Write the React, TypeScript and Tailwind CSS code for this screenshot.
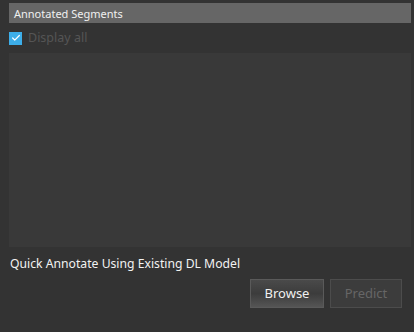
import { Check } from "lucide-react";

const font = { fontFamily: '"Noto Sans", "Open Sans", sans-serif' };

export default function App() {
  return (
    <div className="w-[414px] h-[332px] bg-[#333333] text-[12px] leading-none" style={font}>
      <div className="pt-[3px] pl-[9px] pr-[3px]">
        <div className="h-[20px] bg-[#666666] text-[#f0f0f0] text-[11px] flex items-center pl-[5px]">
          Annotated Segments
        </div>
        <div className="h-[30px] flex items-center gap-[6px]">
          <div className="w-[13px] h-[13px] bg-[#3daee9] flex items-center justify-center">
            <Check className="w-[10px] h-[10px] text-white" strokeWidth={3} />
          </div>
          <span className="text-[12.5px] text-[#555555]">Display all</span>
        </div>
        <div className="h-[194px] bg-[#393939]" />
        <div className="pt-[11px] pl-[1px] text-[#f2f2f2] text-[12.2px]">Quick Annotate Using Existing DL Model</div>
        <div className="flex justify-end gap-[6px] pr-[9px] mt-[9px]">
          <button className="w-[74px] h-[29px] border border-[#5a5a5a] bg-gradient-to-b from-[#4a4a4a] via-[#3c3c3c] to-[#555555] text-[#f0f0f0] text-[13px]">
            Browse
          </button>
          <button className="w-[72px] h-[29px] border border-[#4c4c4c] bg-[#3c3c3c] text-[#666666] text-[13px]">
            Predict
          </button>
        </div>
      </div>
    </div>
  );
}
